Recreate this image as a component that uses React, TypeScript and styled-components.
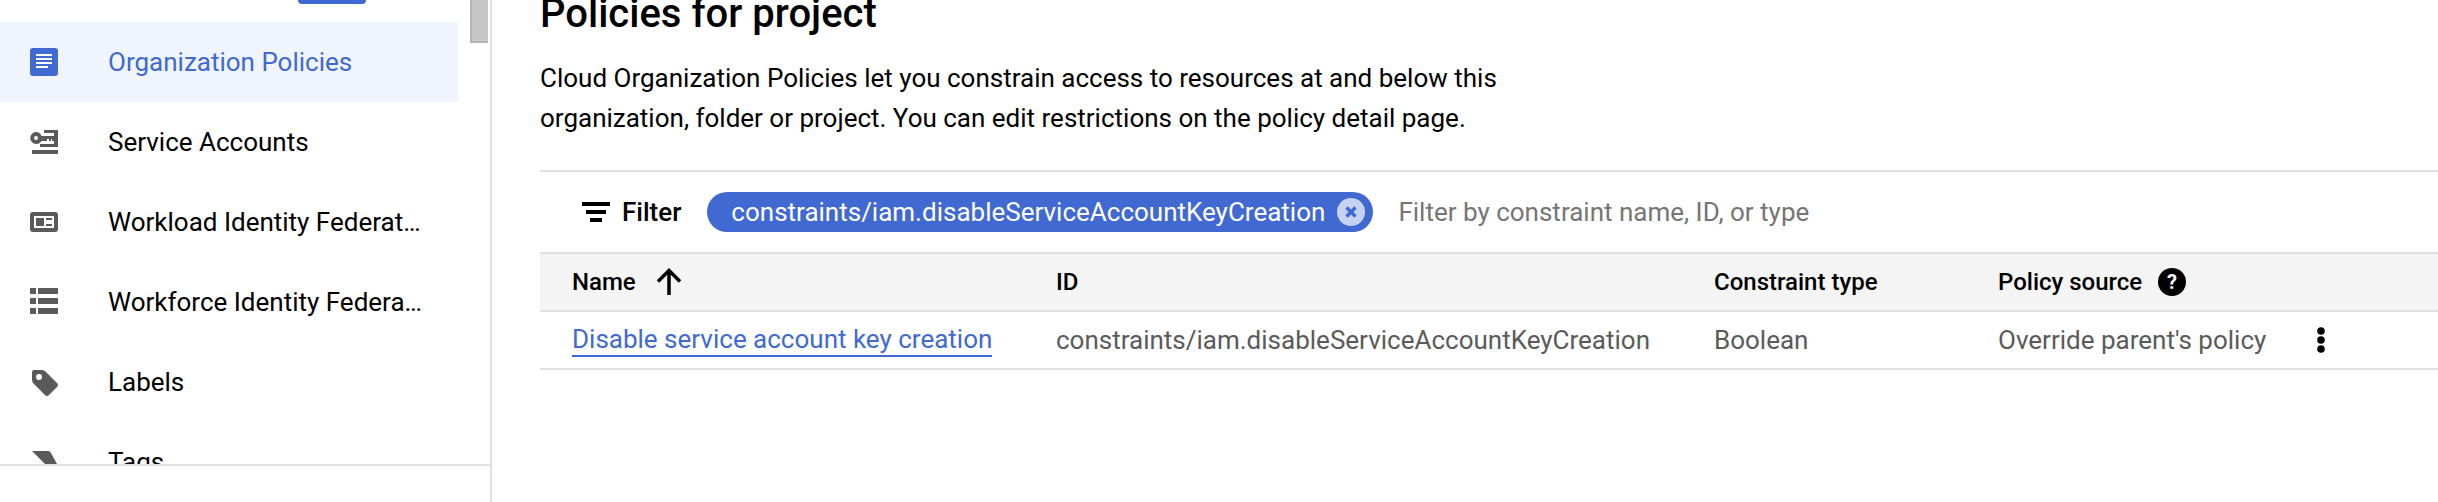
import { createGlobalStyle } from 'styled-components'
import styled from 'styled-components'

const GlobalStyle = createGlobalStyle`
  html, body {
    margin: 0;
    padding: 0;
    background: #fff;
    overflow: hidden;
  }
  body {
    font-family: Roboto, "Liberation Sans", sans-serif;
    font-size: 26px;
    color: #000;
  }
`

const blue = '#4169d2'
const line = '#e0e0e0'

const Page = styled.div`
  display: flex;
  width: 2438px;
  height: 502px;
  overflow: hidden;
`

const Sidebar = styled.aside`
  flex: none;
  display: flex;
  flex-direction: column;
  width: 492px;
  height: 502px;
  box-sizing: border-box;
  border-right: 2px solid ${line};
`

const ScrollArea = styled.div`
  display: flex;
  height: 464px;
  overflow: hidden;
`

const Nav = styled.nav`
  width: 458px;
  flex: none;
`

const NavTop = styled.div`
  display: flex;
  height: 22px;
  padding-left: 298px;
`

const TopButton = styled.div`
  width: 68px;
  height: 4px;
  background: ${blue};
  border-radius: 0 0 5px 5px;
`

const NavRow = styled.div<{ $active?: boolean }>`
  display: flex;
  align-items: center;
  gap: 50px;
  height: 80px;
  padding-left: 30px;
  white-space: nowrap;
  background: ${p => (p.$active ? '#eff4fd' : 'transparent')};
  color: ${p => (p.$active ? blue : '#000')};
`

const Gutter = styled.div`
  flex: none;
  padding-left: 12px;
`

const Thumb = styled.div`
  width: 18px;
  height: 43px;
  box-sizing: border-box;
  background: #c6c6c6;
  border-left: 2px solid #b4b4b4;
  border-bottom: 2px solid #b4b4b4;
`

const SideFooter = styled.div`
  flex: none;
  height: 36px;
  box-sizing: border-box;
  border-top: 2px solid ${line};
  padding: 34px 0 0 28px;
  overflow: hidden;
`

const Icon = styled.svg`
  display: block;
  flex: none;
  width: 28px;
  height: 28px;
  fill: #5a5a5a;
`

const Main = styled.main`
  flex: 1;
  min-width: 0;
  padding-left: 48px;
`

const Title = styled.h1`
  margin: -8px 0 0;
  font-size: 40px;
  line-height: 44px;
  font-weight: 500;
`

const Description = styled.p`
  margin: 22px 0 32px;
  line-height: 40px;
`

const Toolbar = styled.div`
  display: flex;
  align-items: center;
  height: 80px;
  padding-left: 42px;
  border-top: 2px solid ${line};
`

const FilterIcon = styled.svg`
  flex: none;
  width: 28px;
  height: 20px;
  fill: #000;
  margin-right: 12px;
`

const FilterLabel = styled.span`
  font-weight: 500;
  margin-right: 26px;
`

const Chip = styled.div`
  display: flex;
  align-items: center;
  height: 40px;
  padding: 0 8px 0 24px;
  border-radius: 20px;
  background: ${blue};
  color: #fff;
  margin-right: 25px;
`

const ChipClose = styled.svg`
  flex: none;
  width: 28px;
  height: 28px;
  margin-left: 12px;
`

const Placeholder = styled.span`
  color: #757575;
`

const TableRow = styled.div<{ $head?: boolean }>`
  display: grid;
  grid-template-columns: 484px 658px 284px 1fr;
  align-items: center;
  height: 56px;
  padding-left: 32px;
  border-top: 2px solid ${line};
  background: ${p => (p.$head ? '#f4f4f4' : '#fff')};
  font-size: ${p => (p.$head ? 24 : 26)}px;
  font-weight: ${p => (p.$head ? 500 : 400)};
  color: ${p => (p.$head ? '#000' : '#5a5a5a')};
  &:last-child {
    border-bottom: 2px solid ${line};
  }
`

const Cell = styled.div`
  display: flex;
  align-items: center;
  white-space: nowrap;
`

const PolicyLink = styled.a`
  color: ${blue};
  text-decoration: none;
  border-bottom: 2px solid ${blue};
  line-height: 32px;
`

const HeadIcon = styled.svg<{ $gap: number }>`
  flex: none;
  width: 28px;
  height: 28px;
  margin-left: ${p => p.$gap}px;
`

const MoreIcon = styled.svg`
  flex: none;
  width: 8px;
  height: 26px;
  margin-left: 51px;
  fill: #000;
`

const App = () => {
  return (
    <Page>
      <GlobalStyle />
      <Sidebar>
        <ScrollArea>
          <Nav>
            <NavTop><TopButton /></NavTop>
            <NavRow $active>
              <Icon viewBox="0 0 28 28">
                <rect width="28" height="28" rx="3" fill={blue} />
                <path fill="#fff" d="M6 6h16v2H6zM6 10h16v2H6zM6 14h16v2H6zM6 18h12v2H6z" />
              </Icon>
              Organization Policies
            </NavRow>
            <NavRow>
              <Icon viewBox="0 0 28 28">
                <path fillRule="evenodd" d="M6 4a6 6 0 0 1 5.500 4H24v5h-2v-2h-1v2h-2v-2h-2v2h-5.500A6 6 0 1 1 6 4zm0 4a2 2 0 1 0 0 4 2 2 0 0 0 0-4z" />
                <path d="M14 2h14v17H10v-3h14V5H14zM2 22h26v4H2z" />
              </Icon>
              Service Accounts
            </NavRow>
            <NavRow>
              <Icon viewBox="0 0 28 28">
                <path fillRule="evenodd" d="M3 4h22a3 3 0 0 1 3 3v14a3 3 0 0 1-3 3H3a3 3 0 0 1-3-3V7a3 3 0 0 1 3-3zm1 4v12h20V8z" />
                <path d="M6 10h8v8H6zM16 10h6v2h-6zM16 16h6v2h-6z" />
              </Icon>
              Workload Identity Federat…
            </NavRow>
            <NavRow>
              <Icon viewBox="0 0 28 28">
                <path d="M0 0h6v6H0zM8 0h20v6H8zM0 10h6v6H0zM8 10h20v6H8zM0 20h6v6H0zM8 20h20v6H8z" />
              </Icon>
              Workforce Identity Federa…
            </NavRow>
            <NavRow>
              <Icon viewBox="0 0 28 28">
                <path fillRule="evenodd" d="M4 2h8q2 0 3.500 1.500L27 15q2 2 0 4l-8 8q-2 2-4 0L3.500 15.500Q2 14 2 11.500V4q0-2 2-2zm5 4a3 3 0 1 0 0 6 3 3 0 0 0 0-6z" />
              </Icon>
              Labels
            </NavRow>
            <NavRow>
              <Icon viewBox="0 0 28 28">
                <path d="M2 3h16q2 0 3 2l6 11-7 11H9l6-11-5-5z" />
              </Icon>
              Tags
            </NavRow>
          </Nav>
          <Gutter><Thumb /></Gutter>
        </ScrollArea>
        <SideFooter>
          <Icon viewBox="0 0 28 28">
            <path d="M8 0a8 8 0 0 1 8 8v20H0V8a8 8 0 0 1 8-8z" />
          </Icon>
        </SideFooter>
      </Sidebar>
      <Main>
        <Title>Policies for project</Title>
        <Description>
          Cloud Organization Policies let you constrain access to resources at and below this<br />
          organization, folder or project. You can edit restrictions on the policy detail page.
        </Description>
        <Toolbar>
          <FilterIcon viewBox="0 0 28 20">
            <path d="M0 0h28v4H0zM4 8h20v4H4zM8 16h12v4H8z" />
          </FilterIcon>
          <FilterLabel>Filter</FilterLabel>
          <Chip>
            constraints/iam.disableServiceAccountKeyCreation
            <ChipClose viewBox="0 0 28 28">
              <circle cx="14" cy="14" r="14" fill="#c6d2f1" />
              <path d="M9.500 9.500l9 9M18.500 9.500l-9 9" stroke={blue} strokeWidth="3.500" />
            </ChipClose>
          </Chip>
          <Placeholder>Filter by constraint name, ID, or type</Placeholder>
        </Toolbar>
        <TableRow $head>
          <Cell>
            Name
            <HeadIcon $gap={19} viewBox="0 0 28 28">
              <path d="M14 27V3M3 13.500L14 2.500l11 11" fill="none" stroke="#000" strokeWidth="3.500" />
            </HeadIcon>
          </Cell>
          <Cell>ID</Cell>
          <Cell>Constraint type</Cell>
          <Cell>
            Policy source
            <HeadIcon $gap={16} viewBox="0 0 28 28">
              <circle cx="14" cy="14" r="14" fill="#000" />
              <text x="14" y="21" textAnchor="middle" fontSize="20" fontWeight="700" fill="#fff" fontFamily="Roboto, sans-serif">?</text>
            </HeadIcon>
          </Cell>
        </TableRow>
        <TableRow>
          <Cell><PolicyLink>Disable service account key creation</PolicyLink></Cell>
          <Cell>constraints/iam.disableServiceAccountKeyCreation</Cell>
          <Cell>Boolean</Cell>
          <Cell>
            Override parent's policy
            <MoreIcon viewBox="0 0 8 26">
              <circle cx="4" cy="4" r="3.800" />
              <circle cx="4" cy="13" r="3.800" />
              <circle cx="4" cy="22" r="3.800" />
            </MoreIcon>
          </Cell>
        </TableRow>
      </Main>
    </Page>
  )
}

export default App
